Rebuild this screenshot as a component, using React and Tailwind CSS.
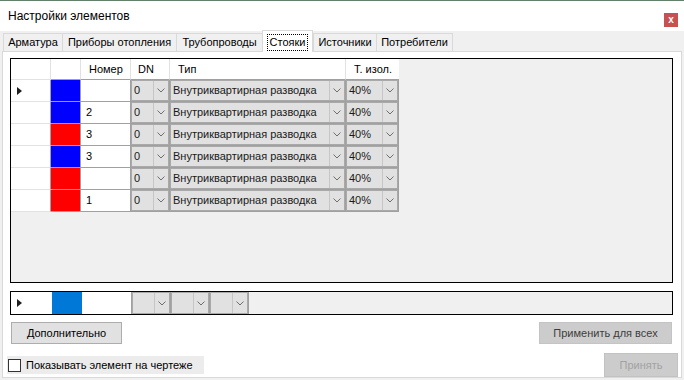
import React from 'react';

const tabs = [
  { label: 'Арматура', w: 'w-[59px]' },
  { label: 'Приборы отопления', w: 'w-[114px]' },
  { label: 'Трубопроводы', w: 'w-[86px]' },
  { label: 'Стояки', w: 'w-[51px]', active: true },
  { label: 'Источники', w: 'w-[63px]' },
  { label: 'Потребители', w: 'w-[77px]' },
];

const rows = [
  { color: 'bg-[#0000ff]', num: '', arrow: true },
  { color: 'bg-[#0000ff]', num: '2' },
  { color: 'bg-[#ff0000]', num: '3' },
  { color: 'bg-[#0000ff]', num: '3' },
  { color: 'bg-[#ff0000]', num: '' },
  { color: 'bg-[#ff0000]', num: '1' },
];

function Chevron() {
  return (
    <svg width="8" height="5" viewBox="0 0 8 5">
      <path d="M0.5 0.5 L4 4 L7.5 0.5" fill="none" stroke="#6e6e6e" strokeWidth="1" />
    </svg>
  );
}

function RowArrow() {
  return (
    <svg width="5" height="8" viewBox="0 0 5 8">
      <path d="M0 0 L5 4 L0 8 Z" fill="#1e1e1e" />
    </svg>
  );
}

// combobox cell: grid line on right/bottom, boxed field with a drop-down part
function Combo({ value, w, bottom = true }) {
  return (
    <div className={`${w} h-full flex border-r border-[#a0a0a0] ${bottom ? 'border-b' : ''}`}>
      <div className="flex flex-1 min-w-0 border border-[#a9a9a9] bg-[#e1e1e1]">
        <div className="flex-1 min-w-0 pl-[2px] flex items-center whitespace-nowrap overflow-hidden text-[#1a1a1a]">
          {value}
        </div>
        <div className="w-[15px] border-l border-[#c6c6c6] flex items-center justify-center">
          <Chevron />
        </div>
      </div>
    </div>
  );
}

export default function App() {
  return (
    <div className="w-[684px] h-[380px] bg-[#f0f0f0] overflow-hidden font-['Liberation_Sans',Arial,sans-serif] text-[11px] text-black">
      <div className="h-px bg-[#64806a]" />

      {/* title bar */}
      <div className="h-[30px] bg-white flex items-start justify-between">
        <span className="ml-[8px] mt-[7px] leading-[16px] text-[12px]">Настройки элементов</span>
        <div className="mt-[12px] mr-[6px] w-[14px] h-[14px] bg-[#c75050] text-white text-[10px] font-bold leading-[13px] text-center">
          x
        </div>
      </div>

      {/* tabs */}
      <div className="h-[20px] flex items-end pl-[3px] relative z-10">
        {tabs.map((t) =>
          t.active ? (
            <div
              key={t.label}
              className={`${t.w} h-[22px] mb-[-1px] bg-white border border-b-0 border-[#d9d9d9] flex items-center justify-center pt-[1px]`}
            >
              <span className="border border-dotted border-black px-[2px] leading-[15px] whitespace-nowrap">{t.label}</span>
            </div>
          ) : (
            <div
              key={t.label}
              className={`${t.w} h-[18px] border-t border-l border-[#d9d9d9] last:border-r flex items-center justify-center bg-[#f0f0f0] whitespace-nowrap`}
            >
              {t.label}
            </div>
          )
        )}
      </div>

      {/* tab page */}
      <div className="mx-[2px] h-[327px] border border-[#d9d9d9] bg-white flex flex-col">
        {/* main grid */}
        <div className="mt-[6px] ml-[7px] w-[663px] h-[225px] border border-black bg-[#f0f0f0] flex flex-col">
          <div className="flex h-[21px] bg-white self-start">
            <div className="w-[40px] border-r border-b border-[#e2e2e2]" />
            <div className="w-[30px] border-r border-b border-[#e2e2e2] border-b-[#a0a0a0]" />
            <div className="w-[50px] border-r border-b border-[#e2e2e2] border-b-[#a0a0a0] pl-[8px] flex items-center">Номер</div>
            <div className="w-[39px] border-r border-b border-[#e2e2e2] border-b-[#a0a0a0] pl-[7px] flex items-center">DN</div>
            <div className="w-[176px] border-r border-b border-[#e2e2e2] border-b-[#a0a0a0] pl-[8px] flex items-center">Тип</div>
            <div className="w-[53px] border-b border-[#a0a0a0] pl-[8px] flex items-center whitespace-nowrap">Т. изол.</div>
          </div>
          {rows.map((r, i) => (
            <div key={i} className="flex h-[22px]">
              <div className="w-[40px] bg-white border-r border-[#a0a0a0] border-b border-b-[#e2e2e2] flex items-center pl-[6px]">
                {r.arrow && <RowArrow />}
              </div>
              <div className={`w-[30px] ${r.color} border-r border-b border-[#a0a0a0]`} />
              <div className="w-[50px] bg-white border-r border-b border-[#a0a0a0] pl-[5px] flex items-center">{r.num}</div>
              <Combo value="0" w="w-[39px]" />
              <Combo value="Внутриквартирная разводка" w="w-[176px]" />
              <Combo value="40%" w="w-[53px]" />
            </div>
          ))}
        </div>

        {/* new-row grid */}
        <div className="mt-[8px] ml-[7px] w-[663px] h-[24px] border border-black bg-[#f0f0f0] flex">
          <div className="w-[41px] bg-white flex items-center pl-[6px]">
            <RowArrow />
          </div>
          <div className="w-[30px] bg-[#0078d7]" />
          <div className="w-[50px] bg-white border-r border-[#a0a0a0]" />
          <Combo value="" w="w-[39px]" bottom={false} />
          <Combo value="" w="w-[39px]" bottom={false} />
          <Combo value="" w="w-[39px]" bottom={false} />
        </div>

        {/* buttons */}
        <div className="mt-[7px] flex justify-between">
          <button className="ml-[8px] w-[111px] h-[22px] bg-[#e1e1e1] border border-[#adadad] text-black">
            Дополнительно
          </button>
          <button className="mr-[9px] w-[133px] h-[22px] bg-[#cccccc] border border-[#c4c4c4] text-[#3d3d3d]">
            Применить для всех
          </button>
        </div>

        <div className="mt-[9px] flex justify-between items-center">
          <label className="ml-[4px] w-[197px] h-[18px] bg-[#ececec] flex items-center whitespace-nowrap">
            <span className="ml-[1px] w-[13px] h-[13px] border border-[#333333] bg-white" />
            <span className="ml-[5px]">Показывать элемент на чертеже</span>
          </label>
          <button className="mr-[3px] w-[74px] h-[24px] bg-[#cccccc] border border-[#c2c2c2] text-[#a2a2a2]">
            Принять
          </button>
        </div>
      </div>
    </div>
  );
}
